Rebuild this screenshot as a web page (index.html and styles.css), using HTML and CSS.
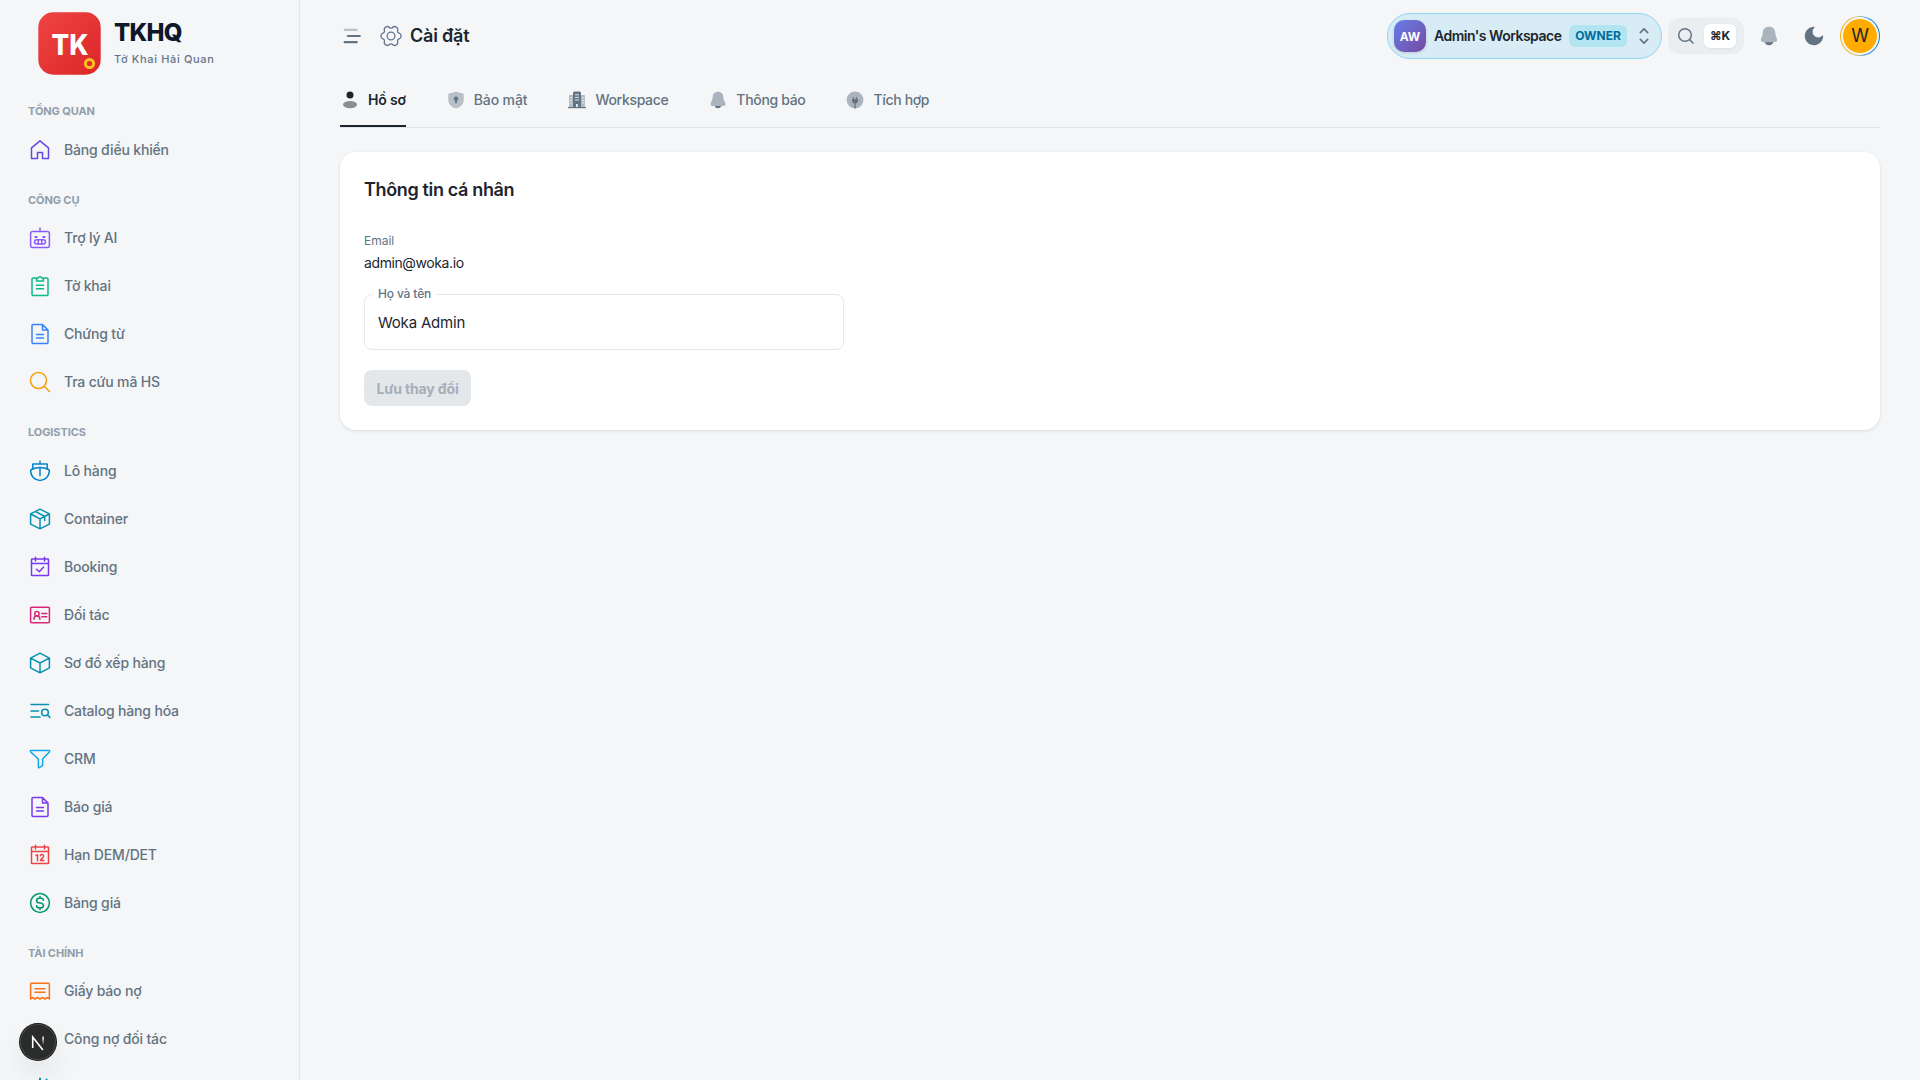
FILE: index.html
```
<!DOCTYPE html>
<html lang="vi">
<head>
<meta charset="UTF-8">
<meta name="viewport" content="width=device-width, initial-scale=1.0">
<title>Cài đặt - TKHQ</title>
<link rel="stylesheet" href="styles.css">
</head>
<body>
<div class="layout">
    <aside class="sidebar">
        <a class="brand">
            <svg class="brand-logo" width="63" height="63" viewBox="0 0 63 63">
                <defs>
                    <linearGradient id="logoBg" x1="0" y1="0" x2="1" y2="1">
                        <stop offset="0" stop-color="#ef4444"/>
                        <stop offset="1" stop-color="#dc2626"/>
                    </linearGradient>
                </defs>
                <rect x=".3" y=".3" width="62.4" height="62.4" rx="15" fill="url(#logoBg)"/>
                <text class="logo-text" x="13.5" y="43" textLength="37" lengthAdjust="spacingAndGlyphs">TK</text>
                <circle cx="51.5" cy="51.5" r="4.1" fill="none" stroke="#fbbf24" stroke-width="3"/>
            </svg>
            <div class="brand-name">
                <strong>TKHQ</strong>
                <span>Tờ Khai Hải Quan</span>
            </div>
        </a>

        <nav class="nav">
            <div class="nav-title">Tổng quan</div>
            <a class="nav-item"><svg class="icon indigo" viewBox="0 0 24 24"><path d="M3.5 9.8 12 2.8l8.5 7V20.5h-6v-6h-5v6h-6z"/></svg>Bảng điều khiển</a>

            <div class="nav-title">Công cụ</div>
            <a class="nav-item"><svg class="icon violet" viewBox="0 0 24 24"><rect x="2.6" y="5.6" width="18.8" height="15.8" rx="2"/><path d="M12 2v3.6"/><rect x="6.6" y="13.8" width="10.8" height="4.2" rx="2"/><path d="M10.2 13.800V18M13.8 13.800V18"/><path d="M7.2 11h1.600M15.2 11h1.600" stroke-width="1.8"/></svg>Trợ lý AI</a>
            <a class="nav-item"><svg class="icon green" viewBox="0 0 24 24"><path d="M8.5 4H5a1 1 0 0 0-1 1v15.500a1 1 0 0 0 1 1h14a1 1 0 0 0 1-1V5a1 1 0 0 0-1-1h-3.500"/><path d="M8.6 7V4.400h1.200a2.300 2.300 0 0 1 4.400 0h1.200V7zM8.5 11.200h7M8.5 14.800h7"/></svg>Tờ khai</a>
            <a class="nav-item"><svg class="icon blue" viewBox="0 0 24 24"><path d="M14.5 2.600H5a1 1 0 0 0-1 1v16.800a1 1 0 0 0 1 1h14a1 1 0 0 0 1-1V8zM14.5 2.600V8H20M8.5 12.500h7M8.5 16h7"/></svg>Chứng từ</a>
            <a class="nav-item"><svg class="icon amber" viewBox="0 0 24 24"><circle cx="10.5" cy="10.5" r="8"/><path d="m16.200 16.200 5.300 5.300"/></svg>Tra cứu mã HS</a>

            <div class="nav-title">Logistics</div>
            <a class="nav-item"><svg class="icon sky" viewBox="0 0 24 24"><path d="M4.800 10V5h14.400v5M12 2.200V5M12 9v7.500"/><path d="M12 8.500c-3 0-6 .7-8.500 2-.6.300-.9.700-.9 1.400.2 5.600 4.200 9.600 9.400 9.600s9.200-4 9.400-9.600c0-.7-.3-1.100-.9-1.400-2.500-1.300-5.500-2-8.500-2z"/></svg>Lô hàng</a>
            <a class="nav-item"><svg class="icon cyan" viewBox="0 0 24 24"><path d="m12 2.200 9.400 4.700v10.200L12 21.800l-9.400-4.700V6.900zM2.800 7 12 11.800 21.200 7M12 11.800v10M7.500 4.500l9.200 4.800v4.200"/></svg>Container</a>
            <a class="nav-item"><svg class="icon purple" viewBox="0 0 24 24"><rect x="3.5" y="4" width="17" height="16.5" rx=".6"/><path d="M3.500 8.500h17M7.500 2.200V6M16.500 2.200V6M8.500 14.200l2.800 2.500 4.300-4.700"/></svg>Booking</a>
            <a class="nav-item"><svg class="icon pink" viewBox="0 0 24 24"><rect x="2.6" y="4.2" width="18.8" height="15.6" rx="1"/><circle cx="8.9" cy="10.7" r="2.2"/><path d="M5.900 16.200c0-4.300 6-4.300 6 0M13.800 10.500h5M13.800 13.800h5"/></svg>Đối tác</a>
            <a class="nav-item"><svg class="icon cyan" viewBox="0 0 24 24"><path d="m12 2.200 9.400 4.900v9.800L12 21.800l-9.400-4.900V7.100zM2.800 7.200 12 12l9.200-4.800M12 12v9.800"/></svg>Sơ đồ xếp hàng</a>
            <a class="nav-item"><svg class="icon cyan" viewBox="0 0 24 24"><g stroke-width="1.6"><path d="M3 5.500h17.500M3 12h7.500M3 18h9"/><circle cx="17" cy="13.5" r="3.3"/><path d="m19.400 15.800 2.500 2.700"/></g></svg>Catalog hàng hóa</a>
            <a class="nav-item"><svg class="icon light-blue" viewBox="0 0 24 24"><path d="M3.200 3.500h17.600c.9 0 1 .9.500 1.500L14.600 12v6.500l-3.200 2.200c-.5.300-1 0-1-.6V12L2.700 5c-.5-.6-.4-1.500.5-1.500z"/></svg>CRM</a>
            <a class="nav-item"><svg class="icon purple" viewBox="0 0 24 24"><path d="M14.500 2.600H5a1 1 0 0 0-1 1v16.800a1 1 0 0 0 1 1h14a1 1 0 0 0 1-1V8zM14.500 2.600V8H20M8.500 12.500h7M8.500 16h7"/></svg>Báo giá</a>
            <a class="nav-item"><svg class="icon red" viewBox="0 0 24 24"><rect x="3.5" y="4" width="17" height="16.5" rx=".6"/><path d="M3.500 8.500h17M7.500 2.200V6M16.500 2.200V6M8 12.500l1.500-.8v6.100M12.300 12.700c.3-1.600 3.400-1.500 3.400.4 0 1.600-2.500 2.600-3.300 4.500h3.500"/></svg>Hạn DEM/DET</a>
            <a class="nav-item"><svg class="icon emerald" viewBox="0 0 24 24"><circle cx="12" cy="12" r="9.4"/><path d="M15.400 9.300c0-1.300-1-2.100-2.300-2.100h-2.200c-1.300 0-2.300.9-2.300 2.300 0 1.300.8 2.100 2 2.300l2.800.5c1.200.2 2 1 2 2.200 0 1.300-1 2.300-2.300 2.300h-2.200c-1.300 0-2.300-.9-2.300-2.100M12 5.500v1.700M12 16.800v1.700" stroke-width="1.6"/></svg>Bảng giá</a>

            <div class="nav-title">Tài chính</div>
            <a class="nav-item"><svg class="icon orange" viewBox="0 0 24 24"><path d="M2.600 20V5.200a1 1 0 0 1 1-1h16.800a1 1 0 0 1 1 1V20l-2-1.500-2.500 1.500-2.400-1.500L12 20l-2.500-1.500L7.100 20l-2.500-1.500zM7 9.700h10M7 13.200h10"/></svg>Giấy báo nợ</a>
            <a class="nav-item"><svg class="icon teal" viewBox="0 0 24 24"><circle cx="9" cy="8" r="4"/><path d="M2.500 20c0-7 13-7 13 0z"/></svg>Công nợ đối tác</a>
            <a class="nav-item"><svg class="icon cyan" viewBox="0 0 24 24"><path d="M12 3.500v17M3 21h18M5 12v8M18.500 4.500v16" stroke-width="2"/></svg></a>
        </nav>
    </aside>

    <main class="main">
        <header class="header">
            <svg class="menu-icon" width="24" height="24" viewBox="0 0 24 24" fill="none" stroke="#637381" stroke-width="2.2" stroke-linecap="round"><path d="M4.700 5.800h12" opacity=".4"/><path d="M7.800 12h12M4.700 18.200h12"/></svg>
            <svg class="gear" width="22" height="22" viewBox="0 0 24 24" fill="none" stroke="#64748b" stroke-width="1.4" stroke-linejoin="round">
                <circle cx="12" cy="12" r="4.2"/>
                <path d="M23 12Q23 14.600 20.900 15.200Q18.600 15.800 19.250 18.150Q19.900 20.500 17.650 21.800Q15.400 23.100 13.700 21.350Q12 19.600 10.300 21.350Q8.600 23.100 6.350 21.800Q4.100 20.500 4.750 18.150Q5.400 15.800 3.100 15.200Q1 14.600 1 12Q1 9.400 3.100 8.800Q5.400 8.200 4.750 5.850Q4.100 3.500 6.350 2.200Q8.600 .9 10.300 2.650Q12 4.400 13.700 2.650Q15.400 .9 17.650 2.200Q19.900 3.500 19.250 5.850Q18.600 8.200 20.900 8.800Q23 9.400 23 12z"/>
            </svg>
            <h1>Cài đặt</h1>

            <div class="workspace">
                <span class="workspace-avatar">AW</span>
                <span class="workspace-name">Admin's Workspace</span>
                <span class="role">OWNER</span>
                <svg class="chevrons" width="16" height="20" viewBox="0 0 16 20" fill="none" stroke="#637381" stroke-width="1.6" stroke-linecap="round" stroke-linejoin="round"><path d="m4.300 6.600 3.700-3.700 3.700 3.700M4.300 13.400 8 17.100l3.700-3.700"/></svg>
            </div>
            <div class="search">
                <svg width="20" height="20" viewBox="0 0 20 20" fill="none" stroke="#637381" stroke-width="1.5" stroke-linecap="round"><circle cx="9" cy="9" r="6.3"/><path d="m13.600 13.600 3.400 3.400"/></svg>
                <kbd>⌘K</kbd>
            </div>
            <svg class="bell" width="24" height="24" viewBox="0 0 24 24" fill="#637381"><path d="M7.500 17.500h9c-.4 2.300-2.200 3.700-4.500 3.700s-4.100-1.400-4.500-3.700z"/><path d="M12 2.800c-4 0-6.300 2.700-6.300 6.300 0 3.500-1.900 4.900-1.900 7 0 1.600 1.700 2.200 3.700 2.200h9c2 0 3.700-.6 3.700-2.200 0-2.100-1.900-3.500-1.900-7 0-3.600-2.300-6.300-6.300-6.300z" fill="#abb4be"/></svg>
            <svg class="moon" width="24" height="24" viewBox="0 0 24 24" fill="#637381"><path d="M12 2.800c-5 0-9.200 4.100-9.200 9.200s4.100 9.200 9.200 9.200 9.200-4.200 9.200-9.200c0-.5-.7-.6-1-.2A5.600 5.600 0 1 1 12.200 3.800c.4-.3.300-1-.2-1z"/></svg>
            <div class="account"><span>W</span></div>
        </header>

        <div class="tabs">
            <a class="tab active"><svg width="20" height="20" viewBox="0 0 20 20" fill="#1c252e"><circle cx="10" cy="5" r="3.5"/><ellipse cx="10" cy="14.6" rx="7" ry="3.7" opacity=".5"/></svg>Hồ sơ</a>
            <a class="tab"><svg width="20" height="20" viewBox="0 0 20 20" fill="#637381"><path d="M2.300 5.300c0-1.200.2-1.500 1.500-2L9 1.900c.8-.2 1.200-.2 2 0l5.200 1.400c1.300.5 1.500.8 1.500 2v4.500c0 5-3.700 7.200-5.800 8-1.400.5-2.400.5-3.800 0-2.100-.8-5.800-3-5.800-8z" opacity=".42"/><path d="M10 6.600a2.200 2.200 0 0 0-1 4.200v2.400h2v-2.400a2.200 2.200 0 0 0-1-4.200z"/></svg>Bảo mật</a>
            <a class="tab"><svg width="20" height="20" viewBox="0 0 20 20" fill="#637381"><path d="M2 6c0-.7.300-1 1-1h3v12H2zM14 5h3c.7 0 1 .3 1 1v11h-4z" opacity=".45"/><path d="M6 3.500c0-1.500.5-2 2-2h4c1.500 0 2 .5 2 2V17H6z"/><path d="M8 4.800h4M8 7.400h4M8 10h4M2.800 8h2M2.800 10.500h2M2.800 13h2M15.200 8h2M15.200 10.500h2M15.200 13h2" stroke="#e1e5e9"/><path d="M9 14h2v3H9z" fill="#dce1e5"/><path d="M1 17h18v1.200H1z"/></svg>Workspace</a>
            <a class="tab"><svg width="20" height="20" viewBox="0 0 20 20" fill="#637381"><path d="M6.300 15h7.400c-.5 2-1.800 3.300-3.700 3.300S6.800 17 6.300 15z"/><path d="M10 1.800c-3.400 0-5.300 2.300-5.300 5.400 0 3.200-2.200 4.700-2.200 6.700 0 1.500 1.300 2.200 3.300 2.200h8.400c2 0 3.300-.7 3.300-2.200 0-2-2.200-3.500-2.200-6.700 0-3.100-1.900-5.400-5.300-5.400z" fill="#abb4be"/></svg>Thông báo</a>
            <a class="tab"><svg width="20" height="20" viewBox="0 0 20 20" fill="#637381"><circle cx="10" cy="10" r="8.4" fill="#abb4be"/><path d="M7 9h6v1.700c0 1.500-1 2.500-2.400 2.700v5H9.400v-5C8 13.200 7 12.200 7 10.700zM8 7h1v2H8zM11 7h1v2h-1z"/></svg>Tích hợp</a>
        </div>

        <section class="card">
            <h2>Thông tin cá nhân</h2>
            <div class="info-label">Email</div>
            <div class="info-value">admin@woka.io</div>
            <div class="field">
                <label for="fullName">Họ và tên</label>
                <input type="text" id="fullName" value="Woka Admin">
            </div>
            <button class="save" disabled>Lưu thay đổi</button>
        </section>
    </main>
</div>

<!-- dev tools button -->
<div class="dev-badge">
    <svg width="36" height="36" viewBox="0 0 36 36" fill="none">
        <defs><linearGradient id="devFade" x1="0" y1="0" x2="0" y2="1"><stop offset=".3" stop-color="#fff"/><stop offset="1" stop-color="#fff" stop-opacity="0"/></linearGradient></defs>
        <path d="M12.700 24V13l10.200 13" stroke="#fff" stroke-width="1.6"/>
        <path d="M22.400 12.400h1.400v8.500h-1.400z" fill="url(#devFade)"/>
    </svg>
</div>
</body>
</html>
```
FILE: styles.css
```
* {
    margin: 0;
    padding: 0;
    box-sizing: border-box;
}

body {
    height: 100vh;
    overflow: hidden;
    background: #f4f6f8;
    color: #1c252e;
    font-family: Inter, "Noto Sans", sans-serif;
    font-size: 14px;
    line-height: 22px;
}

svg {
    flex-shrink: 0;
}

.layout {
    display: flex;
    height: 100vh;
}

/* sidebar */
.sidebar {
    width: 300px;
    flex-shrink: 0;
    border-right: 1px solid #e3e7eb;
    overflow: hidden;
}

.brand {
    display: flex;
    height: 87.2px;
    padding: 12px 0 0 38px;
    gap: 13px;
}

.logo-text {
    fill: #fff;
    font-size: 29px;
    font-weight: 800;
}

.brand-name {
    display: flex;
    flex-direction: column;
    padding-top: 6px;
}

.brand-name strong {
    color: #0f172a;
    font-size: 24px;
    font-weight: 800;
    line-height: 30px;
    letter-spacing: -0.7px;
}

.brand-name span {
    color: #64748b;
    font-size: 11px;
    font-weight: 500;
    line-height: 17px;
    margin-top: 3px;
    letter-spacing: 0.65px;
}

.nav {
    display: flex;
    flex-direction: column;
    padding: 0 16px;
}

.nav-title {
    padding: 16px 8px 8px 12px;
    color: #919eab;
    font-size: 11px;
    font-weight: 700;
    line-height: 16.5px;
    letter-spacing: -0.1px;
    text-transform: uppercase;
}

.nav-item {
    display: flex;
    align-items: center;
    flex-shrink: 0;
    gap: 12px;
    height: 44px;
    margin-bottom: 4px;
    padding-left: 12px;
    color: #637381;
    font-weight: 500;
    letter-spacing: -0.17px;
}

.icon {
    width: 24px;
    height: 24px;
    fill: none;
    stroke: currentColor;
    stroke-width: 1.5;
    stroke-linecap: round;
    stroke-linejoin: round;
}

.indigo { color: #6847e0; }
.violet { color: #8b5cf6; }
.green { color: #10b981; }
.blue { color: #3b82f6; }
.amber { color: #f59e0b; }
.sky { color: #0284c7; }
.cyan { color: #0891b2; }
.purple { color: #7c3aed; }
.pink { color: #db2777; }
.light-blue { color: #0ea5e9; }
.red { color: #ef4444; }
.emerald { color: #059669; }
.orange { color: #f97316; }
.teal { color: #14b8a6; }

/* header */
.main {
    flex: 1;
    padding: 0 40px;
}

.header {
    display: flex;
    align-items: center;
    height: 72px;
}

.gear {
    margin-left: 16px;
}

h1 {
    margin-left: 8px;
    margin-right: auto;
    font-size: 18px;
    font-weight: 600;
    letter-spacing: -0.2px;
}

.workspace {
    display: flex;
    align-items: center;
    width: 275px;
    height: 46px;
    padding-left: 6px;
    border: 1px solid #90d3f1;
    border-radius: 23px;
    background: #d8ecf5;
}

.workspace-avatar {
    width: 32px;
    height: 32px;
    border-radius: 10px;
    background: linear-gradient(135deg, #667eea, #764ba2);
    box-shadow: 0 1px 3px rgba(0, 0, 0, 0.15);
    color: #fff;
    font-size: 12px;
    font-weight: 700;
    line-height: 33px;
    text-align: center;
}

.workspace-name {
    width: 127px;
    margin: 0 8px;
    font-weight: 600;
    white-space: nowrap;
    letter-spacing: -0.5px;
}

.role {
    width: 58px;
    height: 22px;
    margin-right: 9px;
    border-radius: 6px;
    background: #b2e5f1;
    color: #006c9c;
    font-size: 12px;
    font-weight: 700;
    text-align: center;
}

.search {
    display: flex;
    align-items: center;
    justify-content: space-between;
    width: 76px;
    height: 36px;
    margin-left: 6px;
    padding: 0 8px;
    border-radius: 12px;
    background: #ebeef1;
}

kbd {
    width: 32px;
    height: 24px;
    border-radius: 6px;
    background: #fff;
    box-shadow: 0 1px 2px rgba(145, 158, 171, 0.16);
    font-family: Inter, "DejaVu Sans", sans-serif;
    font-size: 12px;
    font-weight: 700;
    line-height: 24px;
    text-align: center;
}

.bell {
    margin-left: 13px;
}

.moon {
    margin-left: 21px;
}

.account {
    width: 40px;
    height: 40px;
    margin-left: 14px;
    padding: 3px;
    border: 1px solid transparent;
    border-radius: 50%;
    background: linear-gradient(#f4f6f8, #f4f6f8) padding-box, linear-gradient(90deg, #ffab00, #dfc47e 40%, #2e9be0 70%, #1877c9) border-box;
}

.account span {
    display: block;
    width: 34px;
    height: 34px;
    margin: -1px;
    border-radius: 50%;
    background: #ffab00;
    font-size: 18px;
    line-height: 33px;
    text-align: center;
}

/* tabs */
.tabs {
    display: flex;
    gap: 40px;
    height: 56px;
    border-bottom: 1px solid #dfe3e8;
}

.tab {
    display: flex;
    align-items: center;
    gap: 8px;
    height: 55px;
    color: #637381;
    font-weight: 500;
    letter-spacing: -0.1px;
    white-space: nowrap;
}

.tab:nth-child(n+3) {
    letter-spacing: -0.33px;
}

.tab.active {
    color: #1c252e;
    font-weight: 600;
    letter-spacing: -0.2px;
    box-shadow: inset 0 -2px #1c252e;
}

/* profile card */
.card {
    height: 278px;
    margin-top: 24px;
    padding: 24px;
    border-radius: 16px;
    background: #fff;
    box-shadow: 0 1px 3px rgba(145, 158, 171, 0.28);
}

h2 {
    font-size: 18px;
    font-weight: 600;
    line-height: 27px;
    letter-spacing: -0.35px;
    margin-bottom: 29px;
}

.info-label {
    color: #637381;
    font-size: 12px;
    line-height: 18px;
    margin-bottom: 2px;
}

.info-value {
    letter-spacing: -0.4px;
    margin-bottom: 20px;
}

.field {
    position: relative;
    width: 480px;
    height: 56px;
    margin-bottom: 20px;
}

/* label sits on the input border */
.field label {
    position: absolute;
    top: -9px;
    left: 9px;
    padding: 0 5px;
    background: #fff;
    color: #637381;
    font-size: 12px;
    font-weight: 500;
    line-height: 18px;
    letter-spacing: -0.15px;
}

.field input {
    width: 100%;
    height: 56px;
    padding: 0 13px;
    border: 1px solid #e6e9ec;
    border-radius: 8px;
    background: none;
    color: #1c252e;
    font: 15px Inter, sans-serif;
    letter-spacing: -0.2px;
    outline: none;
}

.save {
    width: 107px;
    height: 36px;
    border: none;
    border-radius: 8px;
    background: #e3e7ea;
    color: #a4afba;
    font: 700 14px Inter, "Noto Sans", sans-serif;
    letter-spacing: -0.15px;
}

.dev-badge {
    position: fixed;
    left: 20px;
    bottom: 20px;
    width: 36px;
    height: 36px;
    border-radius: 50%;
    background: #2a2c2b;
    box-shadow: 0 0 0 1px #171717, inset 0 0 0 1px #484848, 0 16px 32px -8px rgba(0, 0, 0, 0.24);
}
```
